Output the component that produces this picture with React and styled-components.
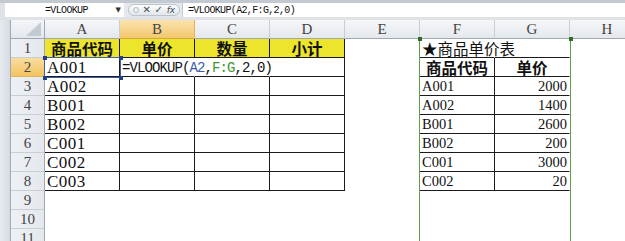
import React from 'react';
import styled, { createGlobalStyle, css } from 'styled-components';

const Global = createGlobalStyle`
  html, body { margin: 0; padding: 0; background: #fff; overflow: hidden; }
  #root { width: 625px; height: 241px; overflow: hidden; }
`;

const Window = styled.div`
  width: 625px;
  height: 241px;
  overflow: hidden;
  background: #dfe3e8;
  display: flex;
  flex-direction: column;
`;

const TopStrip = styled.div`
  flex: none;
  height: 3px;
  background: #c3c9d1;
`;

const FormulaBar = styled.div`
  flex: none;
  height: 14px;
  margin-left: 5px;
  display: flex;
  background: #e4e8ed;
  font-family: "Liberation Mono", monospace;
  font-size: 10px;
  letter-spacing: -0.65px;
  color: #111;
`;

const NameBox = styled.div`
  width: 119px;
  box-sizing: border-box;
  background: #fff;
  display: flex;
  align-items: center;
  justify-content: space-between;
  padding: 0 3px 0 40px;
`;

const Caret = styled.span`
  font-family: "DejaVu Sans", sans-serif;
  font-size: 7px;
  color: #333;
  letter-spacing: 0;
`;

const ButtonZone = styled.div`
  width: 58px;
  box-sizing: border-box;
  display: flex;
  align-items: center;
  padding: 0 2px 0 4px;
`;

const Capsule = styled.div`
  flex: 1;
  height: 12px;
  box-sizing: border-box;
  border: 1px solid #bcc3cc;
  border-radius: 6px;
  background: linear-gradient(#fbfcfd, #e2e6eb);
  display: flex;
  align-items: center;
  justify-content: space-around;
  padding: 0 2px;
`;

const Grip = styled.span`
  width: 4px;
  height: 4px;
  border-radius: 50%;
  border: 1px solid #b5bcc5;
  background: #eef1f4;
`;

const FxButton = styled.span`
  font-family: "DejaVu Sans", sans-serif;
  font-size: ${p => p.$size || 9}px;
  font-style: ${p => (p.$italic ? 'italic' : 'normal')};
  color: #4a4f57;
  letter-spacing: 0;
  line-height: 1;
`;

const FormulaInput = styled.div`
  flex: 1;
  background: #fff;
  border-left: 1px solid #c3c9d1;
  display: flex;
  align-items: center;
  padding-left: 5px;
  white-space: nowrap;
`;

const Gap = styled.div`
  flex: none;
  height: 3px;
`;

const Sheet = styled.div`
  flex: 1;
  display: flex;
  min-height: 0;
`;

const LeftEdge = styled.div`
  flex: none;
  width: 10px;
  background: linear-gradient(90deg, #e7ebf0, #d5dbe2);
  border-right: 1px solid #9ea8b5;
`;

const GridWrap = styled.div`
  flex: 1;
  position: relative;
  overflow: hidden;
  background: #fff;
`;

const Grid = styled.div`
  display: grid;
  grid-template-columns: 34px repeat(8, 75px);
  grid-template-rows: repeat(12, 19px);
  width: 634px;
`;

const Corner = styled.div`
  position: relative;
  background: linear-gradient(#f4f6f8, #e3e7ec);
  border-right: 1px solid #9ea7b3;
  border-bottom: 1px solid #9ea7b3;
  &::after {
    content: '';
    position: absolute;
    right: 3px;
    bottom: 2px;
    width: 0;
    height: 0;
    border-left: 15px solid transparent;
    border-bottom: 14px solid #c4cad2;
  }
`;

const ColHeader = styled.div`
  box-sizing: border-box;
  display: flex;
  align-items: center;
  justify-content: center;
  font-family: "Liberation Serif", serif;
  font-size: 15px;
  line-height: 1;
  color: #444;
  border-right: 1px solid #c8ced6;
  border-bottom: 1px solid #9ea7b3;
  background: linear-gradient(#f6f7f9, #e4e8ed);
  ${p => p.$active && css`
    background: linear-gradient(#fae2ae, #f3c86d);
    border-right-color: #e2b35e;
    border-bottom-color: #d9a443;
  `}
`;

const RowHeader = styled.div`
  box-sizing: border-box;
  display: flex;
  align-items: center;
  justify-content: center;
  padding-top: 1px;
  font-family: "Liberation Serif", serif;
  font-size: 15px;
  line-height: 1;
  color: #444;
  background: linear-gradient(90deg, #eef1f4, #e4e8ed);
  border-right: 1px solid #9ea7b3;
  border-bottom: 1px solid #c8ced6;
  ${p => p.$active && css`
    background: linear-gradient(#f9dc9e, #f2c461);
    border-right-color: #d9a443;
    border-bottom-color: #e2b35e;
  `}
`;

const fonts = {
  cjk: css`
    font-family: "Noto Sans CJK SC", sans-serif;
    font-size: 15.5px;
  `,
  serifBig: css`
    font-family: "Liberation Serif", serif;
    font-size: 17px;
    letter-spacing: 0.5px;
  `,
  serifSmall: css`
    font-family: "Liberation Serif", serif;
    font-size: 14.5px;
  `,
  mono: css`
    font-family: "Liberation Mono", monospace;
    font-size: 14px;
    letter-spacing: -0.9px;
  `,
};

const Cell = styled.div`
  box-sizing: border-box;
  display: flex;
  align-items: center;
  justify-content: ${p => (p.$align === 'center' ? 'center' : p.$align === 'right' ? 'flex-end' : 'flex-start')};
  padding: 1px 2px 0;
  line-height: 1;
  white-space: nowrap;
  overflow: visible;
  position: relative;
  z-index: ${p => (p.$overflow ? 2 : 1)};
  color: #111;
  font-weight: ${p => (p.$bold ? 700 : 400)};
  background: ${p => p.$fill || 'transparent'};
  border-right: 1px solid ${p => p.$br || 'transparent'};
  border-bottom: 1px solid ${p => p.$bb || 'transparent'};
  ${p => fonts[p.$font || 'serifSmall']}
`;

const Ref = styled.span`
  color: ${p => p.$color};
`;

const RefBox = styled.div`
  position: absolute;
  z-index: 3;
  box-sizing: border-box;
  pointer-events: none;
  ${p => css`
    left: ${p.$left}px;
    top: ${p.$top}px;
    width: ${p.$width}px;
    ${p.$height ? `height: ${p.$height}px;` : 'bottom: -20px;'}
    border-left: 1px solid ${p.$color};
    border-right: 1px solid ${p.$color};
    border-top: ${p.$sides === 'all' ? `1px solid ${p.$color}` : 'none'};
    border-bottom: ${p.$sides === 'all' ? `1px solid ${p.$color}` : 'none'};
  `}
`;

const Handle = styled.span`
  position: absolute;
  width: 4px;
  height: 4px;
  background: ${p => p.$color};
  ${p => (p.$x === 'l' ? 'left: -2.5px;' : 'right: -2.5px;')}
  ${p => (p.$y === 't' ? 'top: -2.5px;' : 'bottom: -2.5px;')}
`;

const BLACK = '#1a1a1a';
const YELLOW = '#ede52c';
const GREEN = '#5c9e4b';
const BLUE = '#3f5fa8';

const COLS = ['A', 'B', 'C', 'D', 'E', 'F', 'G', 'H'];
const leftCodes = [null, null, 'A001', 'A002', 'B001', 'B002', 'C001', 'C002', 'C003'];
const headers = ['商品代码', '单价', '数量', '小计'];
const priceTable = [
  ['A001', '2000'],
  ['A002', '1400'],
  ['B001', '2600'],
  ['B002', '200'],
  ['C001', '3000'],
  ['C002', '20'],
];

const Formula = () => (
  <>
    =VLOOKUP(<Ref $color="#3b5ca6">A2</Ref>,<Ref $color="#3f9436">F:G</Ref>,2,0)
  </>
);

function cellFor(r, c) {
  const p = {};
  let content = null;
  if (c <= 3 && r >= 1 && r <= 8) {
    p.$br = BLACK;
    p.$bb = BLACK;
    if (r === 1) {
      p.$fill = YELLOW;
      p.$bold = true;
      p.$font = 'cjk';
      p.$align = 'center';
      content = headers[c];
    } else if (c === 0) {
      p.$font = 'serifBig';
      content = leftCodes[r];
    }
    if (r === 2 && (c === 1 || c === 2)) p.$br = 'transparent';
    if (r === 2 && c === 1) {
      p.$font = 'mono';
      p.$overflow = true;
      content = <Formula />;
    }
  }
  if ((c === 5 || c === 6) && r >= 1 && r <= 8) {
    p.$bb = BLACK;
    if (c === 5 && r >= 2) p.$br = BLACK;
    if (r === 1 && c === 5) {
      p.$font = 'cjk';
      p.$overflow = true;
      content = '★商品单价表';
    } else if (r === 2) {
      p.$font = 'cjk';
      p.$bold = true;
      p.$align = 'center';
      content = c === 5 ? '商品代码' : '单价';
    } else if (r >= 3) {
      const [code, price] = priceTable[r - 3];
      p.$font = 'serifSmall';
      if (c === 5) content = code;
      else {
        p.$align = 'right';
        content = price;
      }
    }
  }
  return { p, content };
}

export default function App() {
  const rows = Array.from({ length: 11 }, (_, i) => i + 1);
  return (
    <Window>
      <Global />
      <TopStrip />
      <FormulaBar>
        <NameBox>
          <span>=VLOOKUP</span>
          <Caret>▼</Caret>
        </NameBox>
        <ButtonZone>
          <Capsule>
            <Grip />
            <FxButton $size={10}>✕</FxButton>
            <FxButton $size={10}>✓</FxButton>
            <FxButton $italic $size={9}>fx</FxButton>
          </Capsule>
        </ButtonZone>
        <FormulaInput>=VLOOKUP(A2,F:G,2,0)</FormulaInput>
      </FormulaBar>
      <Gap />
      <Sheet>
        <LeftEdge />
        <GridWrap>
          <Grid>
            <Corner />
            {COLS.map(col => (
              <ColHeader key={col} $active={col === 'B'}>{col}</ColHeader>
            ))}
            {rows.map(r => (
              <React.Fragment key={r}>
                <RowHeader $active={r === 2}>{r}</RowHeader>
                {COLS.map((col, c) => {
                  const { p, content } = cellFor(r, c);
                  return (
                    <Cell key={col} {...p}>
                      {content}
                    </Cell>
                  );
                })}
              </React.Fragment>
            ))}
          </Grid>
          <RefBox $color={GREEN} $left={408} $top={19} $width={152}>
            <Handle $color="#2f6b25" $x="l" $y="t" />
            <Handle $color="#2f6b25" $x="r" $y="t" />
          </RefBox>
          <RefBox $color={BLUE} $sides="all" $left={33} $top={37} $width={77} $height={21}>
            <Handle $color="#233f86" $x="l" $y="t" />
            <Handle $color="#233f86" $x="r" $y="t" />
            <Handle $color="#233f86" $x="l" $y="b" />
            <Handle $color="#233f86" $x="r" $y="b" />
          </RefBox>
        </GridWrap>
      </Sheet>
    </Window>
  );
}
